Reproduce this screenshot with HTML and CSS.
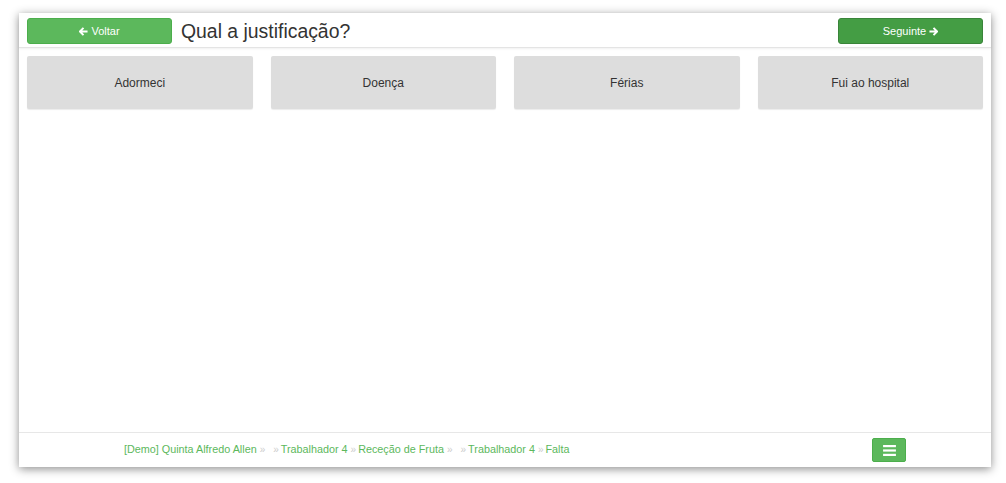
FILE: index.html
```html
<!DOCTYPE html>
<html lang="pt">
  <head>
    <meta charset="UTF-8" />
    <meta name="viewport" content="width=device-width, initial-scale=1.0" />
    <title>Qual a justificação?</title>
    <link rel="stylesheet" href="styles.css">
  </head>
  <body>
    <div class="window">
      <!-- Top bar -->
      <div class="topbar">
        <button class="btn btn-back">
          <svg class="arrow" viewBox="0 0 10 10" width="9" height="9"><path d="M5 1 L1 5 L5 9 M1.5 5 H9.5" fill="none" stroke="#fff" stroke-width="2.2" stroke-linejoin="miter"/></svg>
          Voltar
        </button>
        <h1 class="question">Qual a justificação?</h1>
        <button class="btn btn-next">
          Seguinte
          <svg class="arrow" viewBox="0 0 10 10" width="9" height="9"><path d="M5 1 L9 5 L5 9 M8.5 5 H0.5" fill="none" stroke="#fff" stroke-width="2.2" stroke-linejoin="miter"/></svg>
        </button>
      </div>

      <!-- Options -->
      <div class="options">
        <div class="option">Adormeci</div>
        <div class="option">Doença</div>
        <div class="option">Férias</div>
        <div class="option">Fui ao hospital</div>
      </div>

      <!-- Footer -->
      <div class="footer">
        <div class="crumbs">
          <a href="#">[Demo] Quinta Alfredo Allen</a><span class="sep">»</span>
          <span class="sep">»</span><a href="#">Trabalhador 4</a><span class="sep">»</span><a href="#">Receção de Fruta</a><span class="sep">»</span>
          <span class="sep">»</span><a href="#">Trabalhador 4</a><span class="sep">»</span><a href="#">Falta</a>
        </div>
        <button class="menu-btn">
          <svg viewBox="0 0 14 12" width="13" height="11"><rect x="0" y="0" width="14" height="2.4" fill="#fff"/><rect x="0" y="4.8" width="14" height="2.4" fill="#fff"/><rect x="0" y="9.6" width="14" height="2.4" fill="#fff"/></svg>
        </button>
      </div>
    </div>
  </body>
</html>
```

FILE: styles.css
```css
/* Page */
body {
  margin: 0;
  padding: 13px 15px 16px 19px;
  background-color: #fff;
  font-family: "Liberation Sans", Arial, sans-serif;
  color: #333;
}

.window {
  height: 454px;
  background-color: #fff;
  box-shadow: 0 2px 9px rgba(0, 0, 0, 0.45);
  display: flex;
  flex-direction: column;
}

/* Top bar */
.topbar {
  display: flex;
  align-items: center;
  padding: 5px 8px 3px 8px;
  border-bottom: 1px solid #e4e4e4;
  box-shadow: 0 1px 2px rgba(0, 0, 0, 0.06);
}

.btn {
  width: 145px;
  height: 26px;
  border-radius: 3px;
  border: 1px solid #4cae4c;
  color: #fff;
  font-family: "Liberation Sans", Arial, sans-serif;
  font-size: 11px;
  display: flex;
  align-items: center;
  justify-content: center;
  gap: 3px;
  padding: 0;
}

.btn-back {
  background-color: #5cb85c;
}

.btn-next {
  background-color: #449d44;
  border-color: #398439;
  margin-left: auto;
}

.question {
  margin: 0 0 0 9px;
  font-size: 19.4px;
  font-weight: normal;
  color: #333;
}

/* Options */
.options {
  display: grid;
  grid-template-columns: repeat(4, 1fr);
  gap: 18px;
  padding: 8px 8px 0 8px;
}

.option {
  height: 53px;
  background-color: #ddd;
  border-radius: 2px;
  box-shadow: 0 1px 1px rgba(0, 0, 0, 0.08);
  display: flex;
  align-items: center;
  justify-content: center;
  font-size: 12px;
  color: #333;
}

/* Footer */
.footer {
  margin-top: auto;
  height: 34px;
  border-top: 1px solid #e7e7e7;
  display: flex;
  align-items: center;
  padding: 0 85px 0 105px;
}

.crumbs {
  font-size: 10.8px;
  color: #5cb85c;
  margin-top: -3px;
}

.crumbs a {
  color: #5cb85c;
  text-decoration: none;
}

.crumbs .sep {
  color: #ccc;
  font-size: 10px;
  margin: 0 2px 0 3px;
}

.menu-btn {
  margin-left: auto;
  width: 34px;
  height: 24px;
  background-color: #5cb85c;
  border: 1px solid #4cae4c;
  border-radius: 2px;
  display: flex;
  align-items: center;
  justify-content: center;
  padding: 0;
}
```
